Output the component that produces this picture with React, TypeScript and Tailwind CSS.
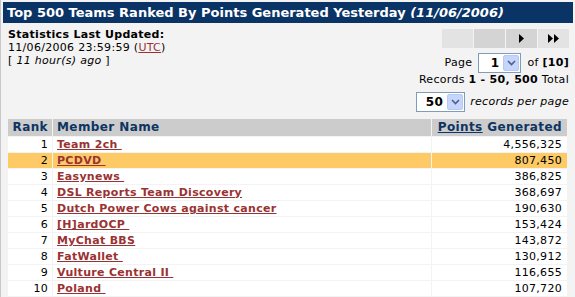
import React from 'react';

const rows = [
  { rank: 1, name: 'Team 2ch\u00a0', points: '4,556,325' },
  { rank: 2, name: 'PCDVD\u00a0', points: '807,450', hot: true },
  { rank: 3, name: 'Easynews\u00a0', points: '386,825' },
  { rank: 4, name: 'DSL Reports Team Discovery', points: '368,697' },
  { rank: 5, name: 'Dutch Power Cows against cancer', points: '190,630' },
  { rank: 6, name: '[H]ardOCP\u00a0', points: '153,424' },
  { rank: 7, name: 'MyChat BBS', points: '143,872' },
  { rank: 8, name: 'FatWallet\u00a0', points: '130,912' },
  { rank: 9, name: 'Vulture Central II\u00a0', points: '116,655' },
  { rank: 10, name: 'Poland\u00a0', points: '107,720' },
];

function Chevron() {
  return (
    <svg width="9" height="6" viewBox="0 0 9 6">
      <path d="M1 1 L4.5 4.5 L8 1" fill="none" stroke="#4d6185" strokeWidth="1.6" />
    </svg>
  );
}

function SelectBox({ value, width }: { value: string; width: string }) {
  return (
    <div className={`flex h-[20px] ${width} items-center border border-[#7f9db9] bg-white`}>
      <span className="flex-1 pr-[4px] text-right text-[12px] font-bold">{value}</span>
      <span className="mr-[1px] flex h-[16px] w-[16px] items-center justify-center rounded-[2px] border border-[#b7c9f2] bg-[#c6d5fb]">
        <Chevron />
      </span>
    </div>
  );
}

function Play({ double }: { double?: boolean }) {
  return (
    <svg width={double ? 11 : 6} height="9" viewBox={double ? '0 0 11 9' : '0 0 6 9'}>
      <path d="M0 0 L5 4.5 L0 9 Z" fill="#000" />
      {double && <path d="M6 0 L11 4.5 L6 9 Z" fill="#000" />}
    </svg>
  );
}

export default function App() {
  return (
    <div className="min-h-screen border-l border-[#c8c8c8] bg-[#f3f3f3] px-[2px] pt-[2px] font-['DejaVu_Sans',Verdana,sans-serif] text-[11px] tracking-[0.3px] text-black">
      <div className="flex h-[21px] items-center bg-[#0a3366] pl-[4px] text-[13px] font-bold tracking-[0px] text-white">
        Top 500 Teams Ranked By Points Generated Yesterday&nbsp;<i>(11/06/2006)</i>
      </div>

      <div className="pl-[5px] pr-[4px]">
        <div className="flex justify-between">
          <div className="mt-[5px] leading-[13px]">
            <div className="font-bold">Statistics Last Updated:</div>
            <div>
              11/06/2006 23:59:59 (<span className="text-[#993333] underline">UTC</span>)
            </div>
            <div>
              [ <i>11 hour(s) ago</i> ]
            </div>
          </div>

          <div className="flex flex-col items-end">
            <div className="mt-[6px] flex gap-[1px]">
              <div className="h-[19px] w-[31px] bg-[#e3e3e3]" />
              <div className="h-[19px] w-[31px] bg-[#d4d4d4]" />
              <div className="flex h-[19px] w-[31px] items-center justify-center bg-[#d4d4d4]">
                <Play />
              </div>
              <div className="flex h-[19px] w-[31px] items-center justify-center bg-[#e3e3e3]">
                <Play double />
              </div>
            </div>
            <div className="mt-[5px] flex h-[20px] items-center gap-[6px]">
              <span>Page</span>
              <SelectBox value="1" width="w-[43px]" />
              <span>
                of <b>[10]</b>
              </span>
            </div>
            <div className="leading-[13px]">
              Records <b>1 - 50, 500</b> Total
            </div>
            <div className="mt-[6px] flex h-[20px] items-center gap-[5px]">
              <SelectBox value="50" width="w-[49px]" />
              <i>records per page</i>
            </div>
          </div>
        </div>

        <table className="mt-[6px] w-full border-separate border-spacing-[1px] -mx-[1px]">
          <thead>
            <tr className="text-[12px] font-bold tracking-[0.4px] text-[#0d3462]">
              <th className="h-[17px] w-[44px] bg-[#cccccc] pr-[4px] text-right leading-[17px]">Rank</th>
              <th className="bg-[#cccccc] pl-[4px] text-left leading-[17px]">Member Name</th>
              <th className="w-[135px] bg-[#cccccc] pr-[5px] text-right leading-[17px]">
                <span className="underline">Points</span> Generated
              </th>
            </tr>
          </thead>
          <tbody>
            {rows.map((r) => (
              <tr key={r.rank} className={r.hot ? 'bg-[#fdca66]' : 'bg-white'}>
                <td className="h-[15px] pr-[4px] text-right leading-[15px]">{r.rank}</td>
                <td className="pl-[4px] leading-[15px]">
                  <span className="font-bold text-[#993333] underline">{r.name}</span>
                </td>
                <td className="pr-[5px] text-right leading-[15px]">{r.points}</td>
              </tr>
            ))}
          </tbody>
        </table>
      </div>
    </div>
  );
}
